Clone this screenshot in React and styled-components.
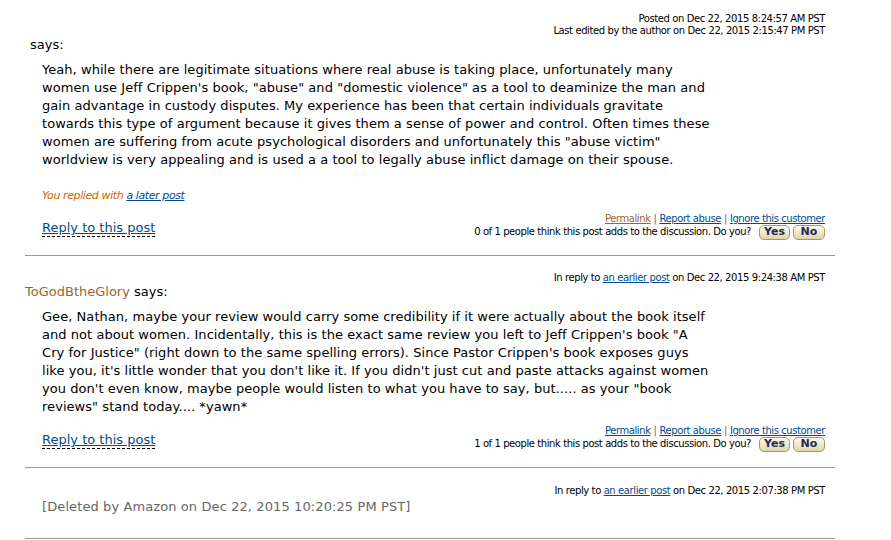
import React from "react";
import styled, { createGlobalStyle } from "styled-components";

const Global = createGlobalStyle`
  html, body { margin: 0; padding: 0; background: #fff; }
  body { font-family: "DejaVu Sans", Verdana, sans-serif; color: #000; }
`;

const Page = styled.div`
  width: 810px;
  margin-left: 25px;
`;

const Post = styled.div`
  border-bottom: 1px solid #999;
  padding-top: ${(p) => p.$top}px;
  padding-bottom: ${(p) => p.$bottom}px;
`;

const Meta = styled.div`
  text-align: right;
  padding-right: 10px;
  font-size: 10px;
  line-height: 12px;
  letter-spacing: -0.4px;
  color: #000;
`;

const Link = styled.a`
  color: ${(p) => (p.$visited ? "#996633" : "#004b91")};
  text-decoration: underline;
  cursor: pointer;
`;

const Author = styled.div`
  font-size: 13px;
  line-height: 16px;
  padding-left: ${(p) => p.$indent || 0}px;
`;

const Name = styled.span`
  color: #996633;
`;

const Body = styled.div`
  margin-top: ${(p) => p.$gap}px;
  padding-left: 17px;
  font-size: 13px;
  line-height: 18px;
  letter-spacing: 0.05px;
  white-space: nowrap;
`;

const Deleted = styled.div`
  padding-left: 17px;
  margin-top: 1px;
  font-size: 13px;
  line-height: 18px;
  letter-spacing: 0.1px;
  color: #666;
`;

const Replied = styled.div`
  margin-top: 20px;
  padding-left: 17px;
  font-size: 11px;
  line-height: 14px;
  letter-spacing: -0.4px;
  font-style: italic;
  color: #cc6600;
`;

const Footer = styled.div`
  margin-top: ${(p) => p.$gap}px;
  display: flex;
  justify-content: space-between;
  align-items: flex-end;
  padding: 0 10px 0 17px;
`;

const ReplyLink = styled.a`
  font-size: 13px;
  line-height: 16px;
  color: #004b91;
  text-decoration: underline;
  border-bottom: 1px dashed #000;
  margin-bottom: 3px;
  cursor: pointer;
`;

const Actions = styled.div`
  display: flex;
  flex-direction: column;
  align-items: flex-end;
  font-size: 10px;
  line-height: 12px;
  letter-spacing: -0.42px;
`;

const Sep = styled.span`
  color: #666;
  margin: 0 3px;
`;

const VoteRow = styled.div`
  display: flex;
  align-items: center;
  gap: 3px;
  height: 16px;
  margin-top: -1px;
`;

const VoteText = styled.span`
  margin-right: 5px;
  margin-top: -1px;
`;

const VoteButton = styled.button`
  font-family: "DejaVu Sans", Verdana, sans-serif;
  font-size: 11px;
  font-weight: bold;
  letter-spacing: 0;
  color: #1d2a5a;
  height: 15px;
  width: ${(p) => p.$w}px;
  padding: 0 0 1px;
  margin-top: 1px;
  border: 1px solid #9c9a6c;
  border-radius: 5px;
  background: linear-gradient(#fbf9e6, #ebe6c2 60%, #ddd6a4);
  box-shadow: inset 0 1px 0 #fff;
  line-height: 12px;
`;

const post1 = [
  "Yeah, while there are legitimate situations where real abuse is taking place, unfortunately many",
  'women use Jeff Crippen\'s book, "abuse" and "domestic violence" as a tool to deaminize the man and',
  "gain advantage in custody disputes. My experience has been that certain individuals gravitate",
  "towards this type of argument because it gives them a sense of power and control. Often times these",
  'women are suffering from acute psychological disorders and unfortunately this "abuse victim"',
  "worldview is very appealing and is used a a tool to legally abuse inflict damage on their spouse.",
];

const post2 = [
  "Gee, Nathan, maybe your review would carry some credibility if it were actually about the book itself",
  'and not about women. Incidentally, this is the exact same review you left to Jeff Crippen\'s book "A',
  'Cry for Justice" (right down to the same spelling errors). Since Pastor Crippen\'s book exposes guys',
  "like you, it's little wonder that you don't like it. If you didn't just cut and paste attacks against women",
  'you don\'t even know, maybe people would listen to what you have to say, but..... as your "book',
  'reviews" stand today.... *yawn*',
];

const Lines = ({ lines }) =>
  lines.map((l, i) => (
    <React.Fragment key={i}>
      {l}
      {i < lines.length - 1 && <br />}
    </React.Fragment>
  ));

const Votes = ({ count }) => (
  <Actions>
    <div>
      <Link $visited={count === 0}>Permalink</Link>
      <Sep>|</Sep>
      <Link>Report abuse</Link>
      <Sep>|</Sep>
      <Link>Ignore this customer</Link>
    </div>
    <VoteRow>
      <VoteText>{count} of 1 people think this post adds to the discussion. Do you?</VoteText>
      <VoteButton $w={31}>Yes</VoteButton>
      <VoteButton $w={32}>No</VoteButton>
    </VoteRow>
  </Actions>
);

export default function App() {
  return (
    <>
      <Global />
      <Page>
        <Post $top={13} $bottom={15}>
          <Meta>
            Posted on Dec 22, 2015 8:24:57 AM PST
            <br />
            Last edited by the author on Dec 22, 2015 2:15:47 PM PST
          </Meta>
          <Author $indent={5}>says:</Author>
          <Body $gap={8}>
            <Lines lines={post1} />
          </Body>
          <Replied>
            You replied with <Link>a later post</Link>
          </Replied>
          <Footer $gap={10}>
            <ReplyLink>Reply to this post</ReplyLink>
            <Votes count={0} />
          </Footer>
        </Post>
        <Post $top={16} $bottom={15}>
          <Meta>
            In reply to <Link>an earlier post</Link> on Dec 22, 2015 9:24:38 AM PST
          </Meta>
          <Author>
            <Name>ToGodBtheGlory</Name> says:
          </Author>
          <Body $gap={8}>
            <Lines lines={post2} />
          </Body>
          <Footer $gap={9}>
            <ReplyLink>Reply to this post</ReplyLink>
            <Votes count={1} />
          </Footer>
        </Post>
        <Post $top={17} $bottom={22}>
          <Meta>
            In reply to <Link>an earlier post</Link> on Dec 22, 2015 2:07:38 PM PST
          </Meta>
          <Deleted>[Deleted by Amazon on Dec 22, 2015 10:20:25 PM PST]</Deleted>
        </Post>
      </Page>
    </>
  );
}
